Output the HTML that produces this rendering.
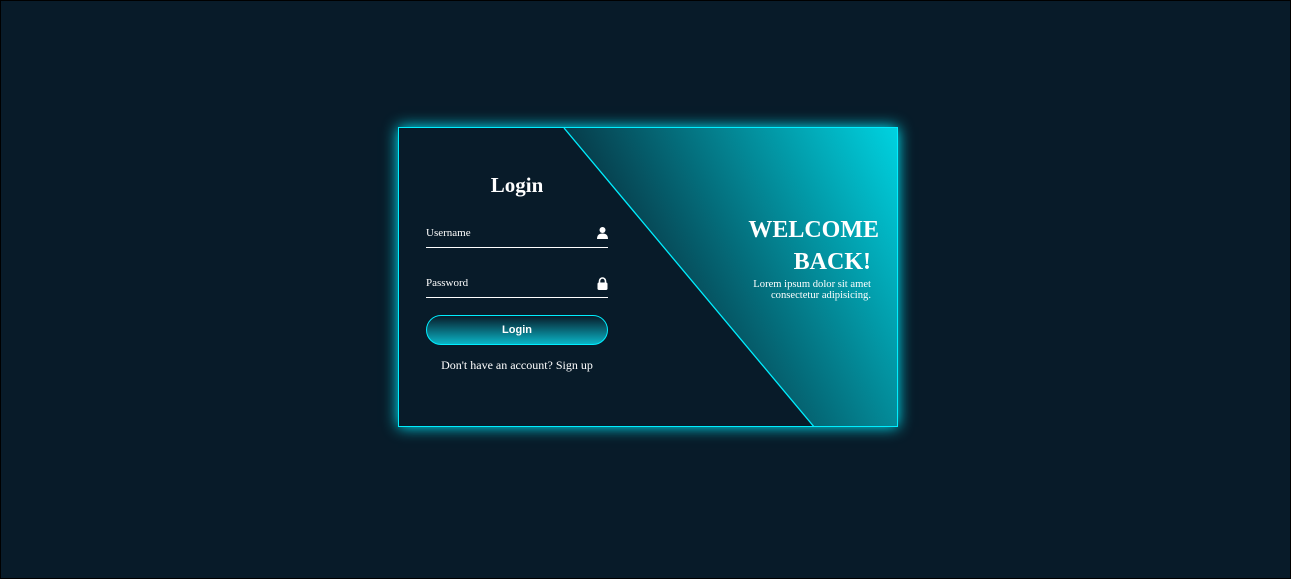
<!DOCTYPE html>
<html><head><style>
html,body{margin:0;padding:0}
body{width:1291px;height:579px;background:#081b29;box-sizing:border-box;border:1px solid #000;position:relative;overflow:hidden;font-family:"Liberation Serif",serif;color:#fff}
.box{position:absolute;left:397px;top:126px;width:498px;height:298px;border:1px solid #0ef;box-shadow:0 0 14px #0ef;overflow:hidden;background:#081b29}
.bg{position:absolute;inset:0;background:linear-gradient(62deg,#081b29 38%,#00d2e0 100%);clip-path:polygon(165px 0,500px 0,500px 300px,416px 300px)}
svg.line{position:absolute;left:0;top:0}
h2{position:absolute;left:0;width:236px;top:45px;margin:0;text-align:center;font-size:21px;font-weight:bold}
.f{position:absolute;left:27px;width:182px;border-bottom:1.5px solid #fff;height:28px}
.f span{position:absolute;left:0;top:8px;font-size:11px}
.f svg{position:absolute;right:0;top:8px}
.btn{position:absolute;left:27px;top:187px;width:180px;height:28px;border:1px solid #0ef;border-radius:15px;background:linear-gradient(#081b29,#0ab4c6);text-align:center;line-height:28px;font-family:"Liberation Sans",sans-serif;font-weight:bold;font-size:11px}
.su{position:absolute;left:0;width:236px;top:230px;text-align:center;font-size:12px}
.w{position:absolute;right:18px;top:86px;text-align:right;font-size:24px;font-weight:bold;line-height:32px}
.l{position:absolute;right:26px;top:151px;text-align:right;font-size:10.6px;line-height:11px}
</style></head><body>
<div class="box">
<div class="bg"></div>
<svg class="line" width="500" height="300"><line x1="165" y1="0" x2="416" y2="300" stroke="#0ef" stroke-width="1.3"/></svg>
<h2>Login</h2>
<div class="f" style="top:91px"><span>Username</span>
<svg width="11" height="12" viewBox="0 0 11 12"><circle cx="5.5" cy="3" r="3" fill="#fff"/><path d="M0 12 Q0 6.5 5.5 6.5 Q11 6.5 11 12Z" fill="#fff"/></svg></div>
<div class="f" style="top:141px"><span>Password</span>
<svg width="11" height="13" viewBox="0 0 11 13"><path d="M2.5 6V4a3 3 0 0 1 6 0v2" stroke="#fff" stroke-width="1.6" fill="none"/><rect x="0.5" y="5.5" width="10" height="7.5" rx="1.5" fill="#fff"/></svg></div>
<div class="btn">Login</div>
<div class="su">Don't have an account? Sign up</div>
<div class="w">WELCOME<br><span style="margin-right:8px">BACK!</span></div>
<div class="l">Lorem ipsum dolor sit amet<br>consectetur adipisicing.</div>
</div>
</body></html>
